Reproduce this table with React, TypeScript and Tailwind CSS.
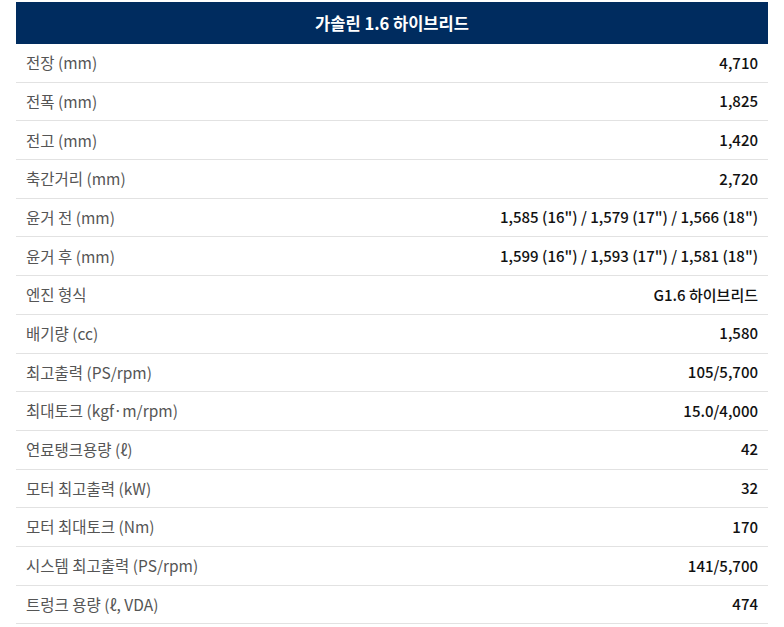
import React from 'react';

const specs: [string, string][] = [
  ['전장 (mm)', '4,710'],
  ['전폭 (mm)', '1,825'],
  ['전고 (mm)', '1,420'],
  ['축간거리 (mm)', '2,720'],
  ['윤거 전 (mm)', '1,585 (16") / 1,579 (17") / 1,566 (18")'],
  ['윤거 후 (mm)', '1,599 (16") / 1,593 (17") / 1,581 (18")'],
  ['엔진 형식', 'G1.6 하이브리드'],
  ['배기량 (cc)', '1,580'],
  ['최고출력 (PS/rpm)', '105/5,700'],
  ['최대토크 (kgf·m/rpm)', '15.0/4,000'],
  ['연료탱크용량 (ℓ)', '42'],
  ['모터 최고출력 (kW)', '32'],
  ['모터 최대토크 (Nm)', '170'],
  ['시스템 최고출력 (PS/rpm)', '141/5,700'],
  ['트렁크 용량 (ℓ, VDA)', '474'],
];

const App: React.FC = () => {
  return (
    <div className="min-h-screen bg-white pt-[2px] px-4 font-['Noto_Sans_CJK_KR','Noto_Sans',sans-serif]">
      <div className="h-[42px] bg-[#002c5f] flex items-center justify-center">
        <h1 className="text-white text-[16.5px] font-bold">가솔린 1.6 하이브리드</h1>
      </div>
      {specs.map(([label, value]) => (
        <div key={label} className="h-[38.7px] border-b border-[#e2e2e2] flex items-center justify-between px-[10px]">
          <span className="text-[15.5px] text-[#555]">{label}</span>
          <span className="text-[15px] font-medium text-[#111]">{value}</span>
        </div>
      ))}
    </div>
  );
};

export default App;
